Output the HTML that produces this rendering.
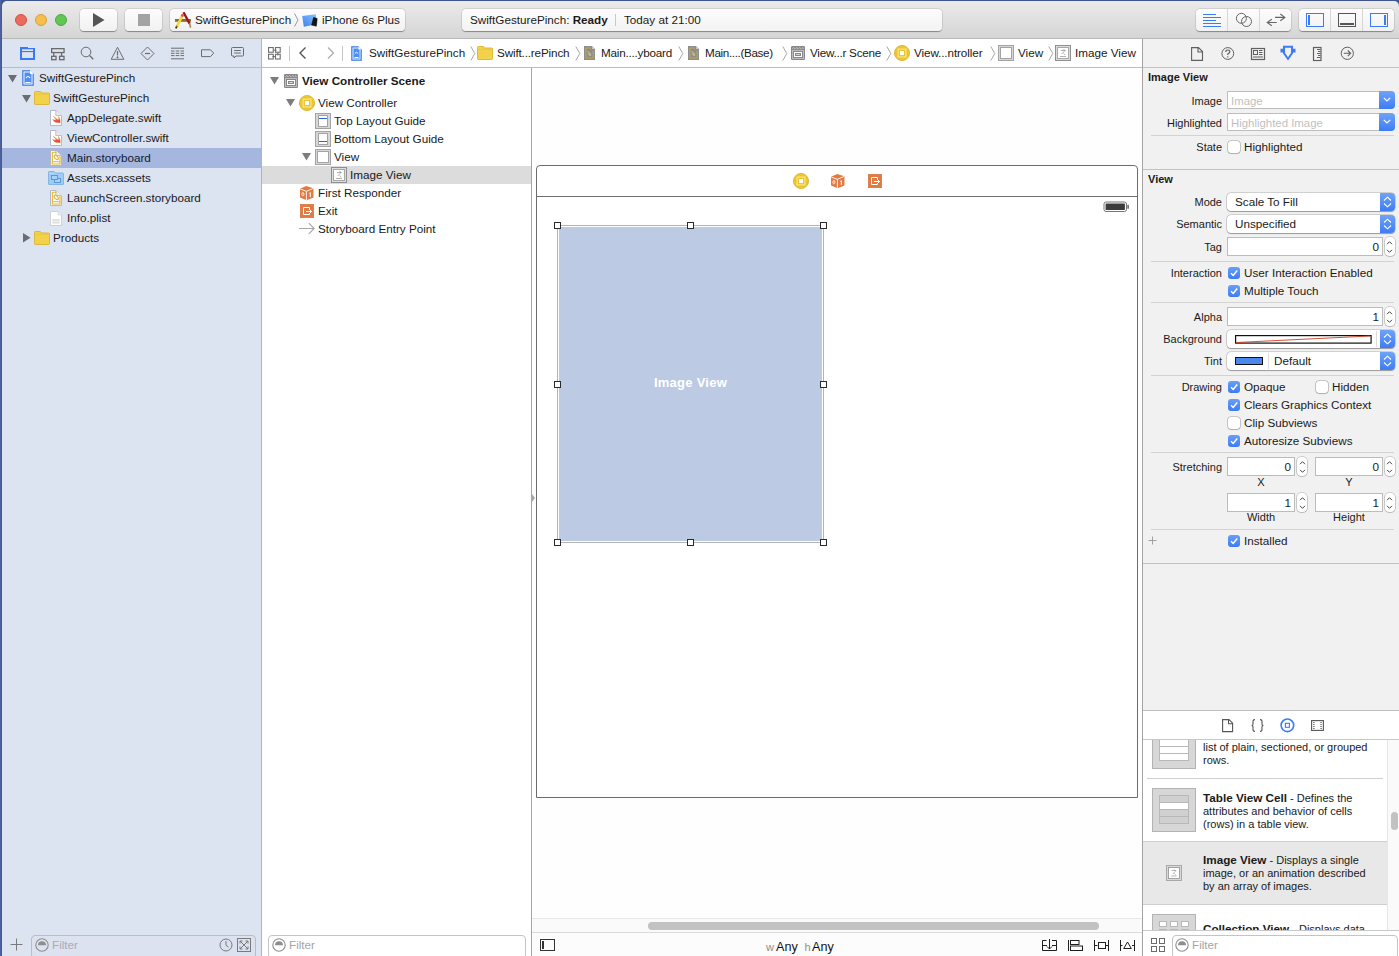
<!DOCTYPE html>
<html><head><meta charset="utf-8">
<style>
*{box-sizing:border-box;margin:0;padding:0}
html,body{width:1399px;height:956px;overflow:hidden;background:#fff;font-family:"Liberation Sans",sans-serif;font-size:11.7px;color:#1a1a1a}
div,svg,span{position:absolute}
.t{white-space:nowrap;line-height:14px}
.b{font-weight:bold}
.btn{background:linear-gradient(#fdfdfd,#f1f1f1);border-radius:4px;box-shadow:0 0.5px 1px rgba(0,0,0,.35),0 0 0 0.5px rgba(0,0,0,.12)}
svg{overflow:visible}
</style></head><body>
<!-- desktop edge -->
<div style="left:0;top:0;width:1399px;height:956px;background:linear-gradient(90deg,#4f67a3,#3f5693 2px)"></div>
<!-- toolbar -->
<div id="tb" style="left:2px;top:1px;width:1397px;height:38px;background:linear-gradient(#ebebeb,#d5d5d5);border-radius:5px 5px 0 0;border-bottom:1px solid #b8b8b8"></div>
<!-- traffic lights -->
<div style="left:15px;top:14px;width:12px;height:12px;border-radius:6px;background:#ed6a5e;border:0.5px solid #d24f44"></div>
<div style="left:35px;top:14px;width:12px;height:12px;border-radius:6px;background:#f5bf4f;border:0.5px solid #d8a13a"></div>
<div style="left:55px;top:14px;width:12px;height:12px;border-radius:6px;background:#62c655;border:0.5px solid #4ca93e"></div>
<!-- play / stop -->
<div class="btn" style="left:80px;top:9px;width:37px;height:22px"></div>
<svg style="left:93px;top:13px" width="12" height="14"><path d="M0 0 L11.5 7 L0 14Z" fill="#555"/></svg>
<div class="btn" style="left:125px;top:9px;width:37px;height:22px"></div>
<div style="left:138px;top:14px;width:12px;height:12px;background:#a3a3a3"></div>
<!-- scheme -->
<div class="btn" style="left:170px;top:9px;width:235px;height:22px"></div>
<svg style="left:174px;top:11px" width="18" height="18">
 <rect x="1" y="8" width="16" height="2.8" fill="#8c6b33"/>
 <path d="M9.5 1.2L15.6 12.6" stroke="#9a1a0e" stroke-width="2.3"/>
 <path d="M15.6 12.4L16.6 16.6" stroke="#b08448" stroke-width="1.7"/>
 <path d="M8.2 4.8L3 15.3" stroke="#ece032" stroke-width="2.6"/>
 <path d="M8.9 3.3L7.9 5.5" stroke="#e0405a" stroke-width="2.6"/>
 <path d="M3.2 14.8L2.2 16.6" stroke="#a07040" stroke-width="2"/>
 <circle cx="2.2" cy="16.7" r="0.9" fill="#222"/>
</svg>
<span class="t" style="left:195px;top:13px">SwiftGesturePinch</span>
<svg style="left:294px;top:13px" width="5" height="14"><path d="M0.5 0.5 L4 7 L0.5 13.5" stroke="#9a9a9a" fill="none"/></svg>
<svg style="left:300px;top:12px" width="20" height="18"><defs><linearGradient id="ipg" x1="1" y1="0" x2="0" y2="1"><stop offset="0" stop-color="#86c4fa"/><stop offset="1" stop-color="#3f7ff0"/></linearGradient></defs><path d="M2.2 4L15.8 2.2L16.9 12.3L3.8 14.8Z" fill="url(#ipg)"/><path d="M13.6 5.4L17.2 6.6L16.3 14.2L11.6 13.1Z" fill="#141414" stroke="#000" stroke-width="0.5" stroke-linejoin="round"/></svg>
<span class="t" style="left:322px;top:13px">iPhone 6s Plus</span>
<!-- status -->
<div class="btn" style="left:462px;top:9px;width:480px;height:22px;background:linear-gradient(#fcfcfc,#f3f3f3)"></div>
<span class="t" style="left:470px;top:13px">SwiftGesturePinch: <b>Ready</b></span>
<div style="left:615px;top:14px;width:1px;height:12px;background:#c8c8c8"></div>
<span class="t" style="left:624px;top:13px">Today at 21:00</span>
<!-- editor seg -->
<div class="btn" style="left:1196px;top:9px;width:95px;height:22px"></div>
<div style="left:1227px;top:9px;width:1px;height:22px;background:#d6d6d6"></div>
<div style="left:1259px;top:9px;width:1px;height:22px;background:#d6d6d6"></div>
<svg style="left:1202px;top:13px" width="20" height="14" stroke="#3b7bf5" stroke-width="1">
 <path d="M1 1.5H14 M1 4.5H19 M1 7.5H14 M1 10.5H19 M1 13.5H19"/>
</svg>
<svg style="left:1235px;top:12px" width="18" height="16" fill="none" stroke="#666" stroke-width="1"><circle cx="6.4" cy="6.3" r="5"/><circle cx="11.5" cy="9.5" r="5"/></svg>
<svg style="left:1266px;top:12px" width="20" height="16" fill="none" stroke="#666" stroke-width="1.1"><path d="M9 5.4H18.9 M14.3 2L18.9 5.4L14.3 8.8 M1.2 10.5H10.7 M5.8 7.2L1.2 10.5L5.8 13.8"/></svg>
<!-- view seg -->
<div class="btn" style="left:1299px;top:9px;width:95px;height:22px"></div>
<div style="left:1330px;top:9px;width:1px;height:22px;background:#d6d6d6"></div>
<div style="left:1362px;top:9px;width:1px;height:22px;background:#d6d6d6"></div>
<svg style="left:1306px;top:13px" width="18" height="14"><rect x="0.5" y="0.5" width="17" height="13" fill="none" stroke="#3b7bf5"/><rect x="2" y="2" width="2" height="10" fill="#3b7bf5"/></svg>
<svg style="left:1338px;top:13px" width="18" height="14"><rect x="0.5" y="0.5" width="17" height="13" fill="none" stroke="#555"/><rect x="2" y="10" width="14" height="2" fill="#555"/></svg>
<svg style="left:1370px;top:13px" width="18" height="14"><rect x="0.5" y="0.5" width="17" height="13" fill="none" stroke="#3b7bf5"/><rect x="14" y="2" width="2" height="10" fill="#3b7bf5"/></svg>

<!-- ============ NAVIGATOR ============ -->
<svg style="left:0;top:0" width="0" height="0"><defs><linearGradient id="swg" x1="0" y1="0" x2="0.3" y2="1"><stop offset="0" stop-color="#f7b060"/><stop offset="1" stop-color="#e4402c"/></linearGradient></defs></svg>

<div id="nav" style="left:2px;top:39px;width:259px;height:917px;background:#dce3f1"></div>
<div style="left:261px;top:39px;width:1px;height:917px;background:#b4b4b4"></div>
<div style="left:2px;top:67px;width:259px;height:1px;background:#b9bcc4"></div>

<!-- nav bar icons -->
<svg style="left:20px;top:47px" width="15" height="13"><path d="M0 0H8V1H15V13H0Z M2 2.2V11H13V2.2Z" fill="#3b78f3" fill-rule="evenodd"/><rect x="2" y="4" width="11" height="1.1" fill="#3b78f3"/></svg>
<svg style="left:51px;top:48px" width="14" height="13" fill="none" stroke="#6b6b6b" stroke-width="1.3"><rect x="0.65" y="0.65" width="12.4" height="3.9"/><path d="M2.8 4.6V8.3 M10.6 4.6V8.3"/><rect x="0.65" y="8.3" width="4.4" height="3.4"/><rect x="8.6" y="8.3" width="4.4" height="3.4"/></svg>
<svg style="left:80px;top:46px" width="15" height="15" fill="none" stroke="#6d6d6d" stroke-width="1"><circle cx="6" cy="6" r="4.8"/><path d="M9.5 9.5L13.3 13.3" stroke-width="1.3"/></svg>
<svg style="left:110px;top:46px" width="15" height="15" fill="none" stroke="#6d6d6d" stroke-width="1"><path d="M7.5 1.3L13.8 13.3H1.2Z" stroke-linejoin="round"/><path d="M7.5 5V9.5" stroke-width="1.2"/><circle cx="7.5" cy="11.3" r="0.6" fill="#6d6d6d"/></svg>
<svg style="left:140px;top:46px" width="15" height="15" fill="none" stroke="#6d6d6d" stroke-width="1"><path d="M7.5 1L14 7.5L7.5 14L1 7.5Z" stroke-linejoin="round"/><path d="M5 7.5H10" stroke-width="1.2"/></svg>
<svg style="left:171px;top:47px" width="14" height="13" fill="none" stroke="#6d6d6d" stroke-width="1"><path d="M0 1.2H13 M0 11.8H13"/><path d="M0 4H3.5 M4.7 4H8.3 M9.5 4H13 M0 6.3H3.5 M4.7 6.3H8.3 M9.5 6.3H13 M0 8.6H3.5 M4.7 8.6H8.3 M9.5 8.6H13"/></svg>
<svg style="left:201px;top:49px" width="14" height="9" fill="none" stroke="#6d6d6d" stroke-width="1"><path d="M0.5 0.8H9.5L12.7 4.2L9.5 7.6H0.5Z" stroke-linejoin="round"/></svg>
<svg style="left:231px;top:47px" width="14" height="13" fill="none" stroke="#6d6d6d" stroke-width="1"><path d="M1.5 0.5H11.5Q12.5 0.5 12.5 1.5V8Q12.5 9 11.5 9H5L3 11V9H1.5Q0.5 9 0.5 8V1.5Q0.5 0.5 1.5 0.5Z"/><path d="M3.2 3.5H9.8 M3.2 6H9.8"/></svg>
<!-- tree -->
<svg style="left:8px;top:75px" width="10" height="8"><path d="M0 0H9L4.5 7.5Z" fill="#6b6d72"/></svg>
<svg style="left:22px;top:70px" width="12" height="16"><path d="M0.5 0.5H8L11.5 4V15.5H0.5Z" fill="#4d8ff2" stroke="#3a74d6" stroke-width="0.6"/><path d="M8 0.5V4H11.5" fill="#fff"/><rect x="2" y="2" width="8" height="12" fill="none" stroke="#fff" stroke-width="0.9"/><path d="M3.5 12.5H8.5" stroke="#fff"/><path d="M4 8Q6 5 8 8" stroke="#fff" fill="none" stroke-width="1.2"/></svg>
<span class="t" style="left:39px;top:71px">SwiftGesturePinch</span>
<svg style="left:22px;top:95px" width="10" height="8"><path d="M0 0H9L4.5 7.5Z" fill="#6b6d72"/></svg>
<svg style="left:34px;top:91px" width="16" height="14"><path d="M0.5 1.3Q0.5 0.5 1.3 0.5H6Q6.6 0.5 7 1.1L7.6 2H14.7Q15.5 2 15.5 2.8V12.7Q15.5 13.5 14.7 13.5H1.3Q0.5 13.5 0.5 12.7Z" fill="#f2d24b" stroke="#dcb52c" stroke-width="0.9"/><path d="M1 3.3H15" stroke="#e5c23a" stroke-width="0.6"/></svg>
<span class="t" style="left:53px;top:91px">SwiftGesturePinch</span>
<svg style="left:50px;top:110px" width="12" height="16"><path d="M0.5 0.5H5.8L11.5 6.2V15.5H0.5Z" fill="#fff" stroke="#aeb2bd" stroke-width="0.9"/><path d="M5.8 0.5V5.5H11.5" fill="#ececec" stroke="#aeb2bd" stroke-width="0.8"/><path d="M2.6 9.4Q4.8 12.9 8.3 12.6Q9.3 12.5 10.1 12.9Q10.6 9.3 8.5 6.4Q9.3 8.6 8.3 9.9Q5.9 8.4 3.4 6.3Q4.9 8.5 6.3 9.9Q4.5 10.3 2.6 9.4Z" fill="url(#swg)" stroke="#ec6a3e" stroke-width="0.4"/></svg><span class="t" style="left:67px;top:111px">AppDelegate.swift</span>
<svg style="left:50px;top:130px" width="12" height="16"><path d="M0.5 0.5H5.8L11.5 6.2V15.5H0.5Z" fill="#fff" stroke="#aeb2bd" stroke-width="0.9"/><path d="M5.8 0.5V5.5H11.5" fill="#ececec" stroke="#aeb2bd" stroke-width="0.8"/><path d="M2.6 9.4Q4.8 12.9 8.3 12.6Q9.3 12.5 10.1 12.9Q10.6 9.3 8.5 6.4Q9.3 8.6 8.3 9.9Q5.9 8.4 3.4 6.3Q4.9 8.5 6.3 9.9Q4.5 10.3 2.6 9.4Z" fill="url(#swg)" stroke="#ec6a3e" stroke-width="0.4"/></svg><span class="t" style="left:67px;top:131px">ViewController.swift</span>
<div style="left:2px;top:148px;width:259px;height:20px;background:#a6b7df"></div>
<svg style="left:50px;top:150px" width="12" height="16"><path d="M0.5 0.5H5.8L11.5 6.2V15.5H0.5Z" fill="#fff" stroke="#aeb2bd" stroke-width="0.9"/><path d="M5.8 0.5V5.5H11.5" fill="#ececec" stroke="#aeb2bd" stroke-width="0.8"/><path d="M6.5 2.2H2.3V14H10V6" fill="none" stroke="#e2b52a" stroke-width="1.1"/><path d="M2.3 11.7H10" stroke="#e2b52a" stroke-width="1"/><ellipse cx="6.2" cy="7.4" rx="2.6" ry="1.5" transform="rotate(45 6.2 7.4)" fill="none" stroke="#e2b52a" stroke-width="1.1"/></svg><span class="t" style="left:67px;top:151px;color:#0e1a33">Main.storyboard</span>
<svg style="left:48px;top:171px" width="16" height="14"><path d="M0.5 1.2Q0.5 0.5 1.2 0.5H6L7.2 2H14.8Q15.5 2 15.5 2.7V13.2Q15.5 13.5 15 13.5H1Q0.5 13.5 0.5 13Z" fill="#9dcdf5" stroke="#7db2df" stroke-width="0.9"/><path d="M1 2.4H7" stroke="#b8def9" stroke-width="0.8"/><rect x="6.5" y="7.5" width="6" height="4" fill="#a6d3f7" stroke="#5d98df" stroke-width="1"/><rect x="3.5" y="4.5" width="6" height="4" fill="#a6d3f7" stroke="#5d98df" stroke-width="1"/></svg><span class="t" style="left:67px;top:171px">Assets.xcassets</span>
<svg style="left:50px;top:190px" width="12" height="16"><path d="M0.5 0.5H5.8L11.5 6.2V15.5H0.5Z" fill="#fff" stroke="#aeb2bd" stroke-width="0.9"/><path d="M5.8 0.5V5.5H11.5" fill="#ececec" stroke="#aeb2bd" stroke-width="0.8"/><path d="M6.5 2.2H2.3V14H10V6" fill="none" stroke="#e2b52a" stroke-width="1.1"/><path d="M2.3 11.7H10" stroke="#e2b52a" stroke-width="1"/><ellipse cx="6.2" cy="7.4" rx="2.6" ry="1.5" transform="rotate(45 6.2 7.4)" fill="none" stroke="#e2b52a" stroke-width="1.1"/></svg><span class="t" style="left:67px;top:191px">LaunchScreen.storyboard</span>
<svg style="left:50px;top:211px" width="12" height="15"><path d="M0.5 0.5H8L11.5 4V14.5H0.5Z" fill="#fff" stroke="#c9c9c9" stroke-width="0.8"/><path d="M8 0.5V4H11.5" fill="#eee" stroke="#c9c9c9" stroke-width="0.6"/><rect x="2.5" y="8" width="7" height="4.5" fill="#d7d7d7"/><path d="M2.5 10.2H9.5 M4.8 8V12.5 M7.2 8V12.5" stroke="#fff" stroke-width="0.6"/></svg><span class="t" style="left:67px;top:211px">Info.plist</span>
<svg style="left:23px;top:233px" width="8" height="10"><path d="M0 0V9.5L7.5 4.75Z" fill="#6b6d72"/></svg><svg style="left:34px;top:231px" width="16" height="14"><path d="M0.5 1.3Q0.5 0.5 1.3 0.5H6Q6.6 0.5 7 1.1L7.6 2H14.7Q15.5 2 15.5 2.8V12.7Q15.5 13.5 14.7 13.5H1.3Q0.5 13.5 0.5 12.7Z" fill="#f2d24b" stroke="#dcb52c" stroke-width="0.9"/><path d="M1 3.3H15" stroke="#e5c23a" stroke-width="0.6"/></svg><span class="t" style="left:53px;top:231px">Products</span>

<!-- ============ JUMP BAR ============ -->
<div style="left:262px;top:39px;width:880px;height:28px;background:#fff"></div>
<div style="left:262px;top:67px;width:880px;height:1px;background:#bdbdbd"></div>
<svg style="left:268px;top:47px" width="14" height="14" fill="none" stroke="#6e6e6e" stroke-width="1.1"><rect x="0.55" y="0.55" width="4.7" height="4.7"/><rect x="7.5" y="0.55" width="4.7" height="4.7"/><rect x="0.55" y="7.3" width="4.7" height="4.7"/><rect x="7.5" y="7.3" width="4.7" height="4.7"/><path d="M5.3 3.2H8.5 M9.85 5.3V8.5 M7.5 9.6H4.3" stroke-width="1"/></svg>
<div style="left:289px;top:46px;width:1px;height:15px;background:#c4c4c4"></div>
<svg style="left:299px;top:47px" width="8" height="13"><path d="M6.5 0.5L1 6L6.5 11.5" stroke="#555" stroke-width="1.4" fill="none"/></svg>
<svg style="left:327px;top:47px" width="8" height="13"><path d="M1 0.5L6.5 6L1 11.5" stroke="#b0b0b0" stroke-width="1.4" fill="none"/></svg>
<div style="left:342px;top:46px;width:1px;height:15px;background:#c4c4c4"></div>
<svg style="left:351px;top:46px" width="11" height="15"><path d="M0.5 0.5H7.5L10.5 3.5V14.5H0.5Z" fill="#4d8ff2" stroke="#3a74d6" stroke-width="0.6"/><path d="M7.5 0.5V3.5H10.5" fill="#fff"/><rect x="2" y="2" width="7" height="11" fill="none" stroke="#fff" stroke-width="0.8"/><path d="M3.5 11.5H7.5" stroke="#fff"/><path d="M3.8 7.5Q5.5 5 7.2 7.5" stroke="#fff" fill="none" stroke-width="1"/></svg>
<span class="t" style="left:369px;top:46px">SwiftGesturePinch</span>
<svg style="left:470px;top:46px" width="6" height="15"><path d="M0.8 0.5L4.8 7.5L0.8 14.5" stroke="#a8a8a8" fill="none" stroke-width="1"/></svg>
<svg style="left:477px;top:46px" width="16" height="14"><path d="M0.5 1.3Q0.5 0.5 1.3 0.5H6Q6.6 0.5 7 1.1L7.6 2H14.7Q15.5 2 15.5 2.8V12.7Q15.5 13.5 14.7 13.5H1.3Q0.5 13.5 0.5 12.7Z" fill="#f2d24b" stroke="#dcb52c" stroke-width="0.9"/><path d="M1 3.3H15" stroke="#e5c23a" stroke-width="0.6"/></svg>
<span class="t" style="left:497px;top:46px;letter-spacing:-0.15px">Swift...rePinch</span>
<svg style="left:575px;top:46px" width="6" height="15"><path d="M0.8 0.5L4.8 7.5L0.8 14.5" stroke="#a8a8a8" fill="none" stroke-width="1"/></svg>
<svg style="left:584px;top:46px" width="11" height="14"><path d="M0 0H8L11 3V14H0Z" fill="#8d8d8d"/><path d="M8 0V3H11" fill="#c8c8c8"/><path d="M1.8 2V12H9.2V4.5 M1.8 2H7" fill="none" stroke="#c9a94a" stroke-width="1"/><path d="M3.3 5.5Q6 6 7 9.5 M3.8 8Q5.5 7.5 6 10" fill="none" stroke="#e2d28e" stroke-width="0.8"/></svg>
<span class="t" style="left:601px;top:46px;letter-spacing:-0.22px">Main....yboard</span>
<svg style="left:678px;top:46px" width="6" height="15"><path d="M0.8 0.5L4.8 7.5L0.8 14.5" stroke="#a8a8a8" fill="none" stroke-width="1"/></svg>
<svg style="left:688px;top:46px" width="11" height="14"><path d="M0 0H8L11 3V14H0Z" fill="#8d8d8d"/><path d="M8 0V3H11" fill="#c8c8c8"/><path d="M1.8 2V12H9.2V4.5 M1.8 2H7" fill="none" stroke="#c9a94a" stroke-width="1"/><path d="M3.3 5.5Q6 6 7 9.5 M3.8 8Q5.5 7.5 6 10" fill="none" stroke="#e2d28e" stroke-width="0.8"/></svg>
<span class="t" style="left:705px;top:46px;letter-spacing:-0.36px">Main....(Base)</span>
<svg style="left:782px;top:46px" width="6" height="15"><path d="M0.8 0.5L4.8 7.5L0.8 14.5" stroke="#a8a8a8" fill="none" stroke-width="1"/></svg>
<svg style="left:791px;top:46px" width="14" height="14"><rect x="0" y="0" width="14" height="14" rx="1.3" fill="#878787"/><path d="M1.3 2.8L2.6 1.6L3.9 2.8M4.4 2.8L5.7 1.6L7 2.8M7.5 2.8L8.8 1.6L10.1 2.8M10.6 2.8L11.9 1.6L12.8 2.6" stroke="#d4d4d4" stroke-width="0.9" fill="none"/><rect x="1.5" y="4.5" width="11" height="8" fill="none" stroke="#bdbdbd" stroke-width="1"/><rect x="3.5" y="6.5" width="7" height="4" fill="none" stroke="#fff" stroke-width="1"/><path d="M5.2 8.5H8.8" stroke="#dadada" stroke-width="1"/></svg>
<span class="t" style="left:810px;top:46px;letter-spacing:-0.25px">View...r Scene</span>
<svg style="left:886px;top:46px" width="6" height="15"><path d="M0.8 0.5L4.8 7.5L0.8 14.5" stroke="#a8a8a8" fill="none" stroke-width="1"/></svg>
<svg style="left:894px;top:45px" width="16" height="16"><circle cx="8" cy="8" r="7.6" fill="#ecc632" stroke="#dcb024" stroke-width="0.8"/><rect x="4.15" y="4.15" width="7.7" height="7.7" fill="none" stroke="#f9e47e" stroke-width="1.3"/><rect x="6" y="6" width="4" height="4" fill="#fff"/></svg>
<span class="t" style="left:914px;top:46px;letter-spacing:-0.1px">View...ntroller</span>
<svg style="left:990px;top:46px" width="6" height="15"><path d="M0.8 0.5L4.8 7.5L0.8 14.5" stroke="#a8a8a8" fill="none" stroke-width="1"/></svg>
<svg style="left:998px;top:45px" width="16" height="16"><rect x="0.5" y="0.5" width="15" height="15" fill="#d7d7d7" stroke="#a3a3a3"/><rect x="2.5" y="2.5" width="11" height="11" fill="#fff" stroke="#a3a3a3"/></svg>
<span class="t" style="left:1018px;top:46px">View</span>
<svg style="left:1048px;top:46px" width="6" height="15"><path d="M0.8 0.5L4.8 7.5L0.8 14.5" stroke="#a8a8a8" fill="none" stroke-width="1"/></svg>
<svg style="left:1055px;top:45px" width="16" height="16"><rect x="0.5" y="0.5" width="15" height="15" fill="#dcdcdc" stroke="#8f8f8f"/><rect x="2.5" y="2.5" width="11" height="11" fill="#fff" stroke="#a8a8a8"/><path d="M6 5.5H10.5 M8.5 4L10 5.6L6.8 8.8 M8.6 8.4L10.3 10.2 M5 11.5H11" stroke="#9c9c9c" stroke-width="0.8" fill="none"/></svg>
<span class="t" style="left:1075px;top:46px">Image View</span>

<!-- ============ OUTLINE ============ -->
<div style="left:262px;top:68px;width:269px;height:888px;background:#fff"></div>
<div style="left:531px;top:68px;width:1px;height:888px;background:#a6a6a6"></div>
<svg style="left:270px;top:77px" width="10" height="8"><path d="M0 0H9L4.5 7.5Z" fill="#7d7d7d"/></svg>
<svg style="left:284px;top:74px" width="14" height="14"><rect x="0" y="0" width="14" height="14" rx="1.3" fill="#878787"/><path d="M1.3 2.8L2.6 1.6L3.9 2.8M4.4 2.8L5.7 1.6L7 2.8M7.5 2.8L8.8 1.6L10.1 2.8M10.6 2.8L11.9 1.6L12.8 2.6" stroke="#d4d4d4" stroke-width="0.9" fill="none"/><rect x="1.5" y="4.5" width="11" height="8" fill="none" stroke="#bdbdbd" stroke-width="1"/><rect x="3.5" y="6.5" width="7" height="4" fill="none" stroke="#fff" stroke-width="1"/><path d="M5.2 8.5H8.8" stroke="#dadada" stroke-width="1"/></svg>
<span class="t b" style="left:302px;top:74px">View Controller Scene</span>
<svg style="left:286px;top:99px" width="10" height="8"><path d="M0 0H9L4.5 7.5Z" fill="#7d7d7d"/></svg>
<svg style="left:299px;top:95px" width="16" height="16"><circle cx="8" cy="8" r="7.6" fill="#ecc632" stroke="#dcb024" stroke-width="0.8"/><rect x="4.15" y="4.15" width="7.7" height="7.7" fill="none" stroke="#f9e47e" stroke-width="1.3"/><rect x="6" y="6" width="4" height="4" fill="#fff"/></svg>
<span class="t" style="left:318px;top:96px">View Controller</span>
<svg style="left:315px;top:113px" width="16" height="16"><rect x="0.5" y="0.5" width="15" height="15" fill="#d7d7d7" stroke="#a3a3a3"/><rect x="3.5" y="2.5" width="9" height="11" fill="#fff" stroke="#a3a3a3"/><path d="M4 5.5H12" stroke="#2f62d8" stroke-width="1"/></svg>
<span class="t" style="left:334px;top:114px">Top Layout Guide</span>
<svg style="left:315px;top:131px" width="16" height="16"><rect x="0.5" y="0.5" width="15" height="15" fill="#d7d7d7" stroke="#a3a3a3"/><rect x="3.5" y="2.5" width="9" height="11" fill="#fff" stroke="#a3a3a3"/><path d="M4 10.5H12" stroke="#2f62d8" stroke-width="1"/></svg>
<span class="t" style="left:334px;top:132px">Bottom Layout Guide</span>
<svg style="left:302px;top:153px" width="10" height="8"><path d="M0 0H9L4.5 7.5Z" fill="#7d7d7d"/></svg>
<svg style="left:315px;top:149px" width="16" height="16"><rect x="0.5" y="0.5" width="15" height="15" fill="#d7d7d7" stroke="#a3a3a3"/><rect x="2.5" y="2.5" width="11" height="11" fill="#fff" stroke="#a3a3a3"/></svg>
<span class="t" style="left:334px;top:150px">View</span>
<div style="left:262px;top:166px;width:269px;height:18px;background:#dcdcdc"></div>
<svg style="left:331px;top:167px" width="16" height="16"><rect x="0.5" y="0.5" width="15" height="15" fill="#dcdcdc" stroke="#8f8f8f"/><rect x="2.5" y="2.5" width="11" height="11" fill="#fff" stroke="#a8a8a8"/><path d="M6 5.5H10.5 M8.5 4L10 5.6L6.8 8.8 M8.6 8.4L10.3 10.2 M5 11.5H11" stroke="#9c9c9c" stroke-width="0.8" fill="none"/></svg>
<span class="t" style="left:350px;top:168px">Image View</span>
<svg style="left:299px;top:185px" width="16" height="16"><path d="M1 3.8L7.2 1L14.5 3.2V12.4L7.6 15.3L1 12.6Z" fill="#e27b42"/><path d="M1.2 4L7.4 6.3L14.3 3.4 M7.4 6.3V15" stroke="#fff" stroke-width="0.9" fill="none"/><ellipse cx="3.9" cy="9.2" rx="1" ry="1.7" stroke="#fff" stroke-width="0.8" fill="none"/><path d="M10.3 8.4L11.3 7.7V12" stroke="#fff" stroke-width="1" fill="none"/></svg>
<span class="t" style="left:318px;top:186px">First Responder</span>
<svg style="left:300px;top:204px" width="14" height="14"><rect x="0.3" y="0.3" width="13.4" height="13.4" fill="#e27b42" stroke="#d46d35" stroke-width="0.6"/><path d="M9.5 6V3.5H3.5V10.5H9.5V9" stroke="#fff" stroke-width="1" fill="none"/><path d="M6 7.5H12 M10.5 6V9" stroke="#fff" stroke-width="1" fill="none"/></svg>
<span class="t" style="left:318px;top:204px">Exit</span>
<svg style="left:299px;top:222px" width="17" height="14"><path d="M0 6.5H15 M9.8 1.2L15.2 6.5L9.8 11.8" stroke="#a6a6a6" stroke-width="1.1" fill="none"/></svg>
<span class="t" style="left:318px;top:222px">Storyboard Entry Point</span>

<!-- ============ CANVAS ============ -->
<div style="left:532px;top:68px;width:610px;height:888px;background:#fefefe"></div>
<div style="left:532px;top:493.5px;width:0;height:0;border-top:4px solid transparent;border-bottom:4px solid transparent;border-left:3.5px solid #a9a9a9"></div>
<!-- scene -->
<div style="left:536px;top:165px;width:602px;height:633px;background:#fff;border:1px solid #6c6c6c;border-radius:4px 4px 0 0"></div>
<div style="left:537px;top:196px;width:600px;height:1px;background:#6f6f6f"></div>
<svg style="left:793px;top:173px" width="16" height="16"><circle cx="8" cy="8" r="7.6" fill="#ecc632" stroke="#dcb024" stroke-width="0.8"/><rect x="4.15" y="4.15" width="7.7" height="7.7" fill="none" stroke="#f9e47e" stroke-width="1.3"/><rect x="6" y="6" width="4" height="4" fill="#fff"/></svg>
<svg style="left:830px;top:173px" width="16" height="16"><path d="M1 3.8L7.2 1L14.5 3.2V12.4L7.6 15.3L1 12.6Z" fill="#e27b42"/><path d="M1.2 4L7.4 6.3L14.3 3.4 M7.4 6.3V15" stroke="#fff" stroke-width="0.9" fill="none"/><ellipse cx="3.9" cy="9.2" rx="1" ry="1.7" stroke="#fff" stroke-width="0.8" fill="none"/><path d="M10.3 8.4L11.3 7.7V12" stroke="#fff" stroke-width="1" fill="none"/></svg>
<svg style="left:868px;top:174px" width="14" height="14"><rect x="0.3" y="0.3" width="13.4" height="13.4" fill="#e27b42" stroke="#d46d35" stroke-width="0.6"/><path d="M9.5 6V3.5H3.5V10.5H9.5V9" stroke="#fff" stroke-width="1" fill="none"/><path d="M6 7.5H12 M10.5 6V9" stroke="#fff" stroke-width="1" fill="none"/></svg>
<svg style="left:1103px;top:201px" width="27" height="12"><rect x="1" y="1" width="22.5" height="9.5" rx="2" fill="none" stroke="#777" stroke-width="1"/><rect x="2.6" y="2.6" width="19.3" height="6.3" rx="0.5" fill="#3c3c3c"/><rect x="24.3" y="3.8" width="1.7" height="4" rx="0.6" fill="#777"/></svg>
<div style="left:557px;top:225px;width:267px;height:318px;background:#bccae4;border:1px solid #b3b3b3;box-shadow:inset 0 0 0 1px #fff"></div>
<span class="t b" style="left:557px;top:376px;width:267px;text-align:center;color:#fff;font-size:13px;letter-spacing:0.25px">Image View</span>
<div style="left:554px;top:222px;width:7px;height:7px;background:#fff;border:1px solid #2a2a2a"></div>
<div style="left:687px;top:222px;width:7px;height:7px;background:#fff;border:1px solid #2a2a2a"></div>
<div style="left:820px;top:222px;width:7px;height:7px;background:#fff;border:1px solid #2a2a2a"></div>
<div style="left:554px;top:381px;width:7px;height:7px;background:#fff;border:1px solid #2a2a2a"></div>
<div style="left:820px;top:381px;width:7px;height:7px;background:#fff;border:1px solid #2a2a2a"></div>
<div style="left:554px;top:539px;width:7px;height:7px;background:#fff;border:1px solid #2a2a2a"></div>
<div style="left:687px;top:539px;width:7px;height:7px;background:#fff;border:1px solid #2a2a2a"></div>
<div style="left:820px;top:539px;width:7px;height:7px;background:#fff;border:1px solid #2a2a2a"></div>

<div style="left:532px;top:918px;width:610px;height:14px;background:#fafafa;border-top:1px solid #e8e8e8"></div>
<div style="left:648px;top:922px;width:451px;height:8px;border-radius:4px;background:#c2c2c2"></div>
<div style="left:532px;top:932px;width:610px;height:24px;background:#fcfcfc;border-top:1px solid #dadada"></div>
<svg style="left:540px;top:939px" width="15" height="12"><rect x="0.5" y="0.5" width="14" height="11" fill="none" stroke="#333" stroke-width="1"/><rect x="2" y="2" width="2" height="8" fill="#333"/></svg>
<span class="t" style="left:766px;top:940px;color:#8e8e8e;font-size:11px">w</span>
<span class="t" style="left:776px;top:939.5px;color:#111;font-size:12.6px">Any</span>
<span class="t" style="left:804.5px;top:940px;color:#8e8e8e;font-size:11px">h</span>
<span class="t" style="left:812px;top:939.5px;color:#111;font-size:12.6px">Any</span>
<svg style="left:1041px;top:938px" width="18" height="14" fill="none" stroke="#1e1e1e" stroke-width="1"><path d="M1.5 2.5V12.5H15.5V2.5H11 M5.5 2.5H1.5 M1.5 7.5H6 M11 7.5H15.5 M8.5 1V11 M6 8.5L8.5 11L11 8.5"/></svg>
<svg style="left:1067px;top:938px" width="17" height="14" fill="none" stroke="#1e1e1e" stroke-width="1"><path d="M1.5 2V13"/><rect x="3.5" y="2.5" width="8.5" height="4"/><rect x="3.5" y="8" width="12" height="4.5"/></svg>
<svg style="left:1093px;top:938px" width="17" height="14" fill="none" stroke="#1e1e1e" stroke-width="1"><path d="M1.5 2V13 M15.5 2V13 M1.5 7.5H4.5 M12.5 7.5H15.5"/><rect x="5.5" y="4.5" width="7" height="6"/></svg>
<svg style="left:1119px;top:938px" width="17" height="14" fill="none" stroke="#1e1e1e" stroke-width="1"><path d="M1.5 2V13 M15.5 2V13 M1.5 7.5H3.5 M13 7.5H15.5 M8.5 4L12.3 10.5H4.7Z" stroke-linejoin="miter"/></svg>
<!-- ============ INSPECTOR ============ -->
<div style="left:1142px;top:39px;width:1px;height:917px;background:#a3a3a3"></div>
<div style="left:1143px;top:39px;width:256px;height:917px;background:#f1f1f1"></div>
<div style="left:1143px;top:67px;width:256px;height:1px;background:#c4c4c4"></div>
<svg style="left:1191px;top:47px" width="13" height="14" fill="none" stroke="#606060" stroke-width="1.1"><path d="M0.6 0.6H7.5L11.5 4.6V13.4H0.6Z M7 0.6V5H11.5"/></svg>
<svg style="left:1221px;top:47px" width="14" height="14" fill="none" stroke="#606060" stroke-width="1"><circle cx="6.8" cy="6.5" r="5.9"/><path d="M4.8 5Q4.8 3 6.8 3Q8.8 3 8.8 4.8Q8.8 6 6.8 7V8" stroke-width="1.2"/><circle cx="6.8" cy="9.9" r="0.7" fill="#606060" stroke="none"/></svg>
<svg style="left:1251px;top:48px" width="14" height="12" fill="none" stroke="#606060" stroke-width="1"><rect x="0.5" y="0.5" width="13" height="11" stroke-width="1.2"/><rect x="2.5" y="2.5" width="4" height="4"/><path d="M8 2.5H11.5 M8 4.5H11.5 M8 6.5H11.5 M2 9H12"/></svg>
<svg style="left:1280px;top:45px" width="16" height="16" fill="#3b7bf5"><path d="M3 0.8H13V3.8H15.5V7.5H13V8.5L8 15.5L3 8.5V7.5H0.5V3.8H3Z"/><path d="M5 2.8H11V8L8 12.3L5 8Z" fill="#f0f0f0"/></svg>
<svg style="left:1313px;top:47px" width="9" height="14" fill="none" stroke="#606060" stroke-width="1"><rect x="0.5" y="0.5" width="7.5" height="13" stroke-width="1.2"/><path d="M4 2.5H7.5 M5 4.5H7.5 M4 6.5H7.5 M5 8.5H7.5 M4 10.5H7.5"/></svg>
<svg style="left:1340px;top:46px" width="15" height="15" fill="none" stroke="#606060" stroke-width="1"><circle cx="7.3" cy="7.3" r="6.1"/><path d="M3.8 7.3H10.5 M7.8 4.5L10.6 7.3L7.8 10.1" stroke-width="1.1"/></svg>

<span class="t b" style="left:1148px;top:70px;font-size:11px">Image View</span>
<span class="t" style="left:1022px;width:200px;text-align:right;top:94px;font-size:11px">Image</span>
<div style="left:1227px;top:91px;width:168px;height:18px;background:#fff;border:1px solid #bdbdbd;border-radius:0 4px 4px 0"></div>
<div style="left:1379px;top:91px;width:16px;height:18px;background:linear-gradient(#6ea3f8,#3f7cf4);border-radius:0 4px 4px 0"></div>
<svg style="left:1383px;top:97px" width="8" height="6"><path d="M0.8 0.8L4 4L7.2 0.8" stroke="#fff" stroke-width="1.2" fill="none"/></svg>
<span class="t" style="left:1231px;top:94px;color:#bfbfbf;font-size:11.4px">Image</span>
<span class="t" style="left:1022px;width:200px;text-align:right;top:116px;font-size:11px">Highlighted</span>
<div style="left:1227px;top:113px;width:168px;height:18px;background:#fff;border:1px solid #bdbdbd;border-radius:0 4px 4px 0"></div>
<div style="left:1379px;top:113px;width:16px;height:18px;background:linear-gradient(#6ea3f8,#3f7cf4);border-radius:0 4px 4px 0"></div>
<svg style="left:1383px;top:119px" width="8" height="6"><path d="M0.8 0.8L4 4L7.2 0.8" stroke="#fff" stroke-width="1.2" fill="none"/></svg>
<span class="t" style="left:1231px;top:116px;color:#bfbfbf;font-size:11.4px">Highlighted Image</span>
<div style="left:1151px;top:135px;width:243px;height:1px;background:#d2d2d2"></div>
<span class="t" style="left:1022px;width:200px;text-align:right;top:140px;font-size:11px">State</span>
<div style="left:1227.5px;top:141px;width:12px;height:12px;border-radius:3px;background:#fff;box-shadow:0 0 0 0.6px rgba(0,0,0,.3),0 0.6px 1px rgba(0,0,0,.15)"></div>
<span class="t" style="left:1244px;top:140px;font-size:11.7px">Highlighted</span>
<div style="left:1143px;top:169px;width:256px;height:1px;background:#c2c2c2"></div>
<span class="t b" style="left:1148px;top:172px;font-size:11px">View</span>
<span class="t" style="left:1022px;width:200px;text-align:right;top:195px;font-size:11px">Mode</span>
<div style="left:1227px;top:193px;width:168px;height:18px;background:#fff;border-radius:4px;box-shadow:0 0 0 0.6px rgba(0,0,0,.22),0 0.8px 1px rgba(0,0,0,.28)"></div>
<div style="left:1380px;top:193px;width:15px;height:18px;background:linear-gradient(#6ea3f8,#3f7cf4);border-radius:0 4px 4px 0"></div>
<svg style="left:1383px;top:196px" width="9" height="12"><path d="M1 4.5L4.5 1.2L8 4.5 M1 7.5L4.5 10.8L8 7.5" stroke="#fff" stroke-width="1.1" fill="none"/></svg>
<span class="t" style="left:1235px;top:195px;font-size:11.7px">Scale To Fill</span>
<span class="t" style="left:1022px;width:200px;text-align:right;top:217px;font-size:11px">Semantic</span>
<div style="left:1227px;top:215px;width:168px;height:18px;background:#fff;border-radius:4px;box-shadow:0 0 0 0.6px rgba(0,0,0,.22),0 0.8px 1px rgba(0,0,0,.28)"></div>
<div style="left:1380px;top:215px;width:15px;height:18px;background:linear-gradient(#6ea3f8,#3f7cf4);border-radius:0 4px 4px 0"></div>
<svg style="left:1383px;top:218px" width="9" height="12"><path d="M1 4.5L4.5 1.2L8 4.5 M1 7.5L4.5 10.8L8 7.5" stroke="#fff" stroke-width="1.1" fill="none"/></svg>
<span class="t" style="left:1235px;top:217px;font-size:11.7px">Unspecified</span>
<span class="t" style="left:1022px;width:200px;text-align:right;top:240px;font-size:11px">Tag</span>
<div style="left:1227px;top:237px;width:156px;height:19px;background:#fff;border:1px solid #bcbcbc"></div>
<span class="t" style="left:1227px;width:152px;text-align:right;top:240px;font-size:11.7px">0</span>
<div style="left:1384.5px;top:237px;width:10px;height:19px;background:#fff;border-radius:4px;box-shadow:0 0 0 0.6px rgba(0,0,0,.25),0 0.6px 1px rgba(0,0,0,.2)"></div>
<svg style="left:1386.0px;top:239.5px" width="7" height="14"><path d="M1 4.2L3.5 1.7L6 4.2 M1 9.8L3.5 12.3L6 9.8" stroke="#444" stroke-width="1" fill="none"/></svg>
<div style="left:1151px;top:261px;width:243px;height:1px;background:#d2d2d2"></div>
<span class="t" style="left:1022px;width:200px;text-align:right;top:266px;font-size:11px">Interaction</span>
<div style="left:1227.5px;top:267px;width:12px;height:12px;border-radius:3px;background:linear-gradient(#68a0f8,#3e7bf3)"></div>
<svg style="left:1227.5px;top:267px" width="12" height="12"><path d="M3 6.3L5.2 8.5L9.2 3.5" stroke="#fff" stroke-width="1.5" fill="none"/></svg>
<span class="t" style="left:1244px;top:266px">User Interaction Enabled</span>
<div style="left:1227.5px;top:285px;width:12px;height:12px;border-radius:3px;background:linear-gradient(#68a0f8,#3e7bf3)"></div>
<svg style="left:1227.5px;top:285px" width="12" height="12"><path d="M3 6.3L5.2 8.5L9.2 3.5" stroke="#fff" stroke-width="1.5" fill="none"/></svg>
<span class="t" style="left:1244px;top:284px">Multiple Touch</span>
<div style="left:1151px;top:302px;width:243px;height:1px;background:#d2d2d2"></div>
<span class="t" style="left:1022px;width:200px;text-align:right;top:310px;font-size:11px">Alpha</span>
<div style="left:1227px;top:307px;width:156px;height:19px;background:#fff;border:1px solid #bcbcbc"></div>
<span class="t" style="left:1227px;width:152px;text-align:right;top:310px;font-size:11.7px">1</span>
<div style="left:1384.5px;top:307px;width:10px;height:19px;background:#fff;border-radius:4px;box-shadow:0 0 0 0.6px rgba(0,0,0,.25),0 0.6px 1px rgba(0,0,0,.2)"></div>
<svg style="left:1386.0px;top:309.5px" width="7" height="14"><path d="M1 4.2L3.5 1.7L6 4.2 M1 9.8L3.5 12.3L6 9.8" stroke="#444" stroke-width="1" fill="none"/></svg>
<span class="t" style="left:1022px;width:200px;text-align:right;top:332px;font-size:11px">Background</span>
<div style="left:1227px;top:330px;width:168px;height:18px;background:#fff;border-radius:4px;box-shadow:0 0 0 0.6px rgba(0,0,0,.22),0 0.8px 1px rgba(0,0,0,.28)"></div>
<div style="left:1380px;top:330px;width:15px;height:18px;background:linear-gradient(#6ea3f8,#3f7cf4);border-radius:0 4px 4px 0"></div>
<svg style="left:1383px;top:333px" width="9" height="12"><path d="M1 4.5L4.5 1.2L8 4.5 M1 7.5L4.5 10.8L8 7.5" stroke="#fff" stroke-width="1.1" fill="none"/></svg>
<div style="left:1376px;top:331px;width:1px;height:16px;background:#dcdcdc"></div>
<svg style="left:1235px;top:334.5px" width="137" height="9"><rect x="0.6" y="0.6" width="135.5" height="7.5" fill="#fff" stroke="#111" stroke-width="1.2"/><path d="M1.5 7.5L135 1" stroke="#d43a20" stroke-width="0.9"/></svg>
<span class="t" style="left:1022px;width:200px;text-align:right;top:354px;font-size:11px">Tint</span>
<div style="left:1227px;top:352px;width:168px;height:18px;background:#fff;border-radius:4px;box-shadow:0 0 0 0.6px rgba(0,0,0,.22),0 0.8px 1px rgba(0,0,0,.28)"></div>
<div style="left:1380px;top:352px;width:15px;height:18px;background:linear-gradient(#6ea3f8,#3f7cf4);border-radius:0 4px 4px 0"></div>
<svg style="left:1383px;top:355px" width="9" height="12"><path d="M1 4.5L4.5 1.2L8 4.5 M1 7.5L4.5 10.8L8 7.5" stroke="#fff" stroke-width="1.1" fill="none"/></svg>
<div style="left:1268px;top:353px;width:1px;height:16px;background:#dcdcdc"></div>
<div style="left:1235px;top:357px;width:28px;height:8px;background:#4a88f0;border:1px solid #111"></div>
<span class="t" style="left:1274px;top:354px">Default</span>
<div style="left:1151px;top:375px;width:243px;height:1px;background:#d2d2d2"></div>
<span class="t" style="left:1022px;width:200px;text-align:right;top:380px;font-size:11px">Drawing</span>
<div style="left:1227.5px;top:381px;width:12px;height:12px;border-radius:3px;background:linear-gradient(#68a0f8,#3e7bf3)"></div>
<svg style="left:1227.5px;top:381px" width="12" height="12"><path d="M3 6.3L5.2 8.5L9.2 3.5" stroke="#fff" stroke-width="1.5" fill="none"/></svg>
<span class="t" style="left:1244px;top:380px">Opaque</span>
<div style="left:1315.5px;top:381px;width:12px;height:12px;border-radius:3px;background:#fff;box-shadow:0 0 0 0.6px rgba(0,0,0,.3),0 0.6px 1px rgba(0,0,0,.15)"></div>
<span class="t" style="left:1332px;top:380px">Hidden</span>
<div style="left:1227.5px;top:399px;width:12px;height:12px;border-radius:3px;background:linear-gradient(#68a0f8,#3e7bf3)"></div>
<svg style="left:1227.5px;top:399px" width="12" height="12"><path d="M3 6.3L5.2 8.5L9.2 3.5" stroke="#fff" stroke-width="1.5" fill="none"/></svg>
<span class="t" style="left:1244px;top:398px">Clears Graphics Context</span>
<div style="left:1227.5px;top:417px;width:12px;height:12px;border-radius:3px;background:#fff;box-shadow:0 0 0 0.6px rgba(0,0,0,.3),0 0.6px 1px rgba(0,0,0,.15)"></div>
<span class="t" style="left:1244px;top:416px">Clip Subviews</span>
<div style="left:1227.5px;top:435px;width:12px;height:12px;border-radius:3px;background:linear-gradient(#68a0f8,#3e7bf3)"></div>
<svg style="left:1227.5px;top:435px" width="12" height="12"><path d="M3 6.3L5.2 8.5L9.2 3.5" stroke="#fff" stroke-width="1.5" fill="none"/></svg>
<span class="t" style="left:1244px;top:434px">Autoresize Subviews</span>
<div style="left:1151px;top:452px;width:243px;height:1px;background:#d2d2d2"></div>
<span class="t" style="left:1022px;width:200px;text-align:right;top:460px;font-size:11px">Stretching</span>
<div style="left:1227px;top:457px;width:68px;height:19px;background:#fff;border:1px solid #bcbcbc"></div>
<span class="t" style="left:1227px;width:64px;text-align:right;top:460px;font-size:11.7px">0</span>
<div style="left:1297px;top:457px;width:10px;height:19px;background:#fff;border-radius:4px;box-shadow:0 0 0 0.6px rgba(0,0,0,.25),0 0.6px 1px rgba(0,0,0,.2)"></div>
<svg style="left:1298.5px;top:459.5px" width="7" height="14"><path d="M1 4.2L3.5 1.7L6 4.2 M1 9.8L3.5 12.3L6 9.8" stroke="#444" stroke-width="1" fill="none"/></svg>
<div style="left:1315px;top:457px;width:68px;height:19px;background:#fff;border:1px solid #bcbcbc"></div>
<span class="t" style="left:1315px;width:64px;text-align:right;top:460px;font-size:11.7px">0</span>
<div style="left:1384.5px;top:457px;width:10px;height:19px;background:#fff;border-radius:4px;box-shadow:0 0 0 0.6px rgba(0,0,0,.25),0 0.6px 1px rgba(0,0,0,.2)"></div>
<svg style="left:1386.0px;top:459.5px" width="7" height="14"><path d="M1 4.2L3.5 1.7L6 4.2 M1 9.8L3.5 12.3L6 9.8" stroke="#444" stroke-width="1" fill="none"/></svg>
<span class="t" style="left:1227px;width:68px;text-align:center;top:475px;font-size:11px">X</span>
<span class="t" style="left:1315px;width:68px;text-align:center;top:475px;font-size:11px">Y</span>
<div style="left:1227px;top:493px;width:68px;height:19px;background:#fff;border:1px solid #bcbcbc"></div>
<span class="t" style="left:1227px;width:64px;text-align:right;top:496px;font-size:11.7px">1</span>
<div style="left:1297px;top:493px;width:10px;height:19px;background:#fff;border-radius:4px;box-shadow:0 0 0 0.6px rgba(0,0,0,.25),0 0.6px 1px rgba(0,0,0,.2)"></div>
<svg style="left:1298.5px;top:495.5px" width="7" height="14"><path d="M1 4.2L3.5 1.7L6 4.2 M1 9.8L3.5 12.3L6 9.8" stroke="#444" stroke-width="1" fill="none"/></svg>
<div style="left:1315px;top:493px;width:68px;height:19px;background:#fff;border:1px solid #bcbcbc"></div>
<span class="t" style="left:1315px;width:64px;text-align:right;top:496px;font-size:11.7px">1</span>
<div style="left:1384.5px;top:493px;width:10px;height:19px;background:#fff;border-radius:4px;box-shadow:0 0 0 0.6px rgba(0,0,0,.25),0 0.6px 1px rgba(0,0,0,.2)"></div>
<svg style="left:1386.0px;top:495.5px" width="7" height="14"><path d="M1 4.2L3.5 1.7L6 4.2 M1 9.8L3.5 12.3L6 9.8" stroke="#444" stroke-width="1" fill="none"/></svg>
<span class="t" style="left:1227px;width:68px;text-align:center;top:510px;font-size:11px">Width</span>
<span class="t" style="left:1315px;width:68px;text-align:center;top:510px;font-size:11px">Height</span>
<div style="left:1151px;top:529px;width:243px;height:1px;background:#d2d2d2"></div>
<svg style="left:1148px;top:536px" width="9" height="9"><path d="M4.5 0.5V8.5 M0.5 4.5H8.5" stroke="#a0a0a0" stroke-width="1"/></svg>
<div style="left:1227.5px;top:535px;width:12px;height:12px;border-radius:3px;background:linear-gradient(#68a0f8,#3e7bf3)"></div>
<svg style="left:1227.5px;top:535px" width="12" height="12"><path d="M3 6.3L5.2 8.5L9.2 3.5" stroke="#fff" stroke-width="1.5" fill="none"/></svg>
<span class="t" style="left:1244px;top:534px">Installed</span>
<div style="left:1143px;top:563px;width:256px;height:1px;background:#c2c2c2"></div>

<!-- ============ LIBRARY ============ -->
<div style="left:1143px;top:710px;width:256px;height:1px;background:#bdbdbd"></div>
<div style="left:1143px;top:711px;width:256px;height:245px;background:#fff"></div>
<svg style="left:1222px;top:719px" width="12" height="14" fill="none" stroke="#555" stroke-width="1.1"><path d="M0.6 0.6H7L10.6 4.2V12.6H0.6Z M6.5 0.6V4.7H10.6"/></svg>
<svg style="left:1251px;top:719px" width="13" height="14" fill="none" stroke="#555" stroke-width="1.1"><path d="M4 0.6Q2 0.6 2 2.5V5Q2 6.5 0.6 6.5Q2 6.5 2 8V10.5Q2 12.4 4 12.4 M9 0.6Q11 0.6 11 2.5V5Q11 6.5 12.4 6.5Q11 6.5 11 8V10.5Q11 12.4 9 12.4"/></svg>
<svg style="left:1280px;top:718px" width="15" height="15" fill="none" stroke="#3b7bf5"><circle cx="7.4" cy="7.3" r="6.3" stroke-width="1.6"/><rect x="5.4" y="5.3" width="4" height="4" stroke-width="1.1"/></svg>
<svg style="left:1311px;top:720px" width="13" height="11" fill="none" stroke="#555" stroke-width="1.1"><rect x="0.6" y="0.6" width="11.8" height="9.8"/><path d="M2.2 2.5H3.6 M2.2 4.5H3.6 M2.2 6.5H3.6 M2.2 8.5H3.6 M9.4 2.5H10.8 M9.4 4.5H10.8 M9.4 6.5H10.8 M9.4 8.5H10.8" stroke-width="0.9"/></svg>
<div style="left:1143px;top:739px;width:256px;height:1px;background:#c8c8c8"></div>
<div style="left:1143px;top:740px;width:244px;height:191px;overflow:hidden">
<svg style="left:9px;top:-18px" width="44" height="47"><rect x="0.5" y="0.5" width="43" height="46" fill="#d7d7d7" stroke="#b3b3b3"/><rect x="7.5" y="17.5" width="29" height="21" fill="#fff" stroke="#b8b8b8"/><path d="M7.5 24.5H36.5 M7.5 31.5H36.5" stroke="#b8b8b8"/></svg>
<span class="t" style="left:60px;top:1px;font-size:11px;line-height:13px;color:#1a1a1a">list of plain, sectioned, or grouped<br>rows.</span>
<div style="left:4px;top:38px;width:236px;height:1px;background:#cfcfcf"></div>
<svg style="left:9px;top:48px" width="44" height="44"><rect x="0.5" y="0.5" width="43" height="43" fill="#d7d7d7" stroke="#b3b3b3"/><rect x="7.5" y="7.5" width="29" height="28" fill="#d0d0d0" stroke="#b8b8b8"/><rect x="7.5" y="14.5" width="29" height="7" fill="#fff" stroke="#b8b8b8"/><path d="M7.5 28.5H36.5" stroke="#b8b8b8"/></svg>
<span class="t" style="left:60px;top:51px;font-size:11px;line-height:13px;color:#1a1a1a"><b style="font-size:11.7px">Table View Cell</b> - Defines the<br>attributes and behavior of cells<br>(rows) in a table view.</span>
<div style="left:0px;top:101px;width:244px;height:1px;background:#cfcfcf"></div>
<div style="left:0px;top:102px;width:244px;height:62px;background:#e8e8e8"></div>
<svg style="left:23px;top:125px" width="16" height="16"><rect x="0.5" y="0.5" width="15" height="15" fill="#d9d9d9" stroke="#a9a9a9"/><rect x="2.5" y="2.5" width="11" height="11" fill="#fff" stroke="#909090" stroke-width="0.8"/><path d="M5.5 5.5H10.2M8 4.5L9.5 6.2L6.8 9M8.5 8.5Q9.5 9.5 10 10.3 M5 11H10.5" stroke="#9a9a9a" stroke-width="0.7" fill="none"/></svg>
<span class="t" style="left:60px;top:113px;font-size:11px;line-height:13px;color:#1a1a1a"><b style="font-size:11.7px">Image View</b> - Displays a single<br>image, or an animation described<br>by an array of images.</span>
<div style="left:0px;top:164px;width:244px;height:1px;background:#cfcfcf"></div>
<svg style="left:9px;top:174px" width="44" height="44"><rect x="0.5" y="0.5" width="43" height="43" fill="#d7d7d7" stroke="#b3b3b3"/><rect x="7.5" y="7.5" width="7" height="5" fill="#fff" stroke="#b8b8b8"/><rect x="18.5" y="7.5" width="7" height="5" fill="#fff" stroke="#b8b8b8"/><rect x="29.5" y="7.5" width="7" height="5" fill="#fff" stroke="#b8b8b8"/><rect x="7.5" y="15.5" width="7" height="5" fill="#fff" stroke="#b8b8b8"/><rect x="18.5" y="15.5" width="7" height="5" fill="#fff" stroke="#b8b8b8"/><rect x="29.5" y="15.5" width="7" height="5" fill="#fff" stroke="#b8b8b8"/></svg>
<span class="t" style="left:60px;top:182px;font-size:11px;line-height:13px;color:#1a1a1a"><b style="font-size:11.7px">Collection View</b> - Displays data</span>
</div>

<div style="left:1387px;top:740px;width:12px;height:191px;background:#fafafa;border-left:1px solid #e6e6e6"></div>
<div style="left:1391px;top:812px;width:7px;height:18px;border-radius:3.5px;background:#c2c2c2"></div>
<div style="left:1143px;top:930px;width:256px;height:1px;background:#c8c8c8"></div>
<div style="left:1143px;top:931px;width:256px;height:25px;background:#fff"></div>
<svg style="left:1151px;top:938px" width="14" height="14" fill="none" stroke="#6a6a6a" stroke-width="1"><rect x="0.5" y="0.5" width="5" height="5"/><rect x="8.5" y="0.5" width="5" height="5"/><rect x="0.5" y="8.5" width="5" height="5"/><rect x="8.5" y="8.5" width="5" height="5"/></svg>
<div style="left:1171.5px;top:934.5px;width:226px;height:24px;background:#fff;border:1px solid #c4c4c4;border-radius:4px"></div>
<svg style="left:1175px;top:938px" width="14" height="14"><circle cx="7" cy="7" r="6.2" fill="none" stroke="#8e8e8e" stroke-width="1.1"/><path d="M3 7.2A4 4 0 0 1 11 7.2Z" fill="#8e8e8e"/></svg>
<span class="t" style="left:1192px;top:938px;color:#a5a5a5;font-size:11.7px">Filter</span>

<!-- nav filter bar -->
<svg style="left:10px;top:938px" width="13" height="13"><path d="M6.5 0.5V12.5 M0.5 6.5H12.5" stroke="#7a7a7a" stroke-width="1"/></svg>
<div style="left:30.5px;top:934.5px;width:225px;height:24px;background:#dce2ef;border:1px solid #b9bdc6;border-radius:4px"></div>
<svg style="left:35px;top:938px" width="14" height="14"><circle cx="7" cy="7" r="6.2" fill="none" stroke="#8e8e8e" stroke-width="1.1"/><path d="M3 7.2A4 4 0 0 1 11 7.2Z" fill="#8e8e8e"/></svg>
<span class="t" style="left:52px;top:938px;color:#a8acb5;font-size:11.7px">Filter</span>
<svg style="left:219px;top:938px" width="14" height="14" fill="none" stroke="#7a7a7a" stroke-width="1"><circle cx="7" cy="7" r="6"/><path d="M7 3V7.3L9.5 9"/></svg>
<svg style="left:237px;top:938px" width="14" height="14" fill="none" stroke="#7a7a7a" stroke-width="1"><rect x="0.5" y="0.5" width="13" height="13"/><path d="M3 3L11 11 M11 3L3 11 M3 3H5.5 M3 3V5.5 M11 3H8.5 M11 3V5.5 M3 11H5.5 M3 11V8.5 M11 11H8.5 M11 11V8.5"/></svg>
<!-- outline filter -->
<div style="left:267.5px;top:934.5px;width:258px;height:24px;background:#fff;border:1px solid #c4c4c4;border-radius:4px"></div>
<svg style="left:272px;top:938px" width="14" height="14"><circle cx="7" cy="7" r="6.2" fill="none" stroke="#8e8e8e" stroke-width="1.1"/><path d="M3 7.2A4 4 0 0 1 11 7.2Z" fill="#8e8e8e"/></svg>
<span class="t" style="left:289px;top:938px;color:#a5a5a5;font-size:11.7px">Filter</span>
</body></html>
